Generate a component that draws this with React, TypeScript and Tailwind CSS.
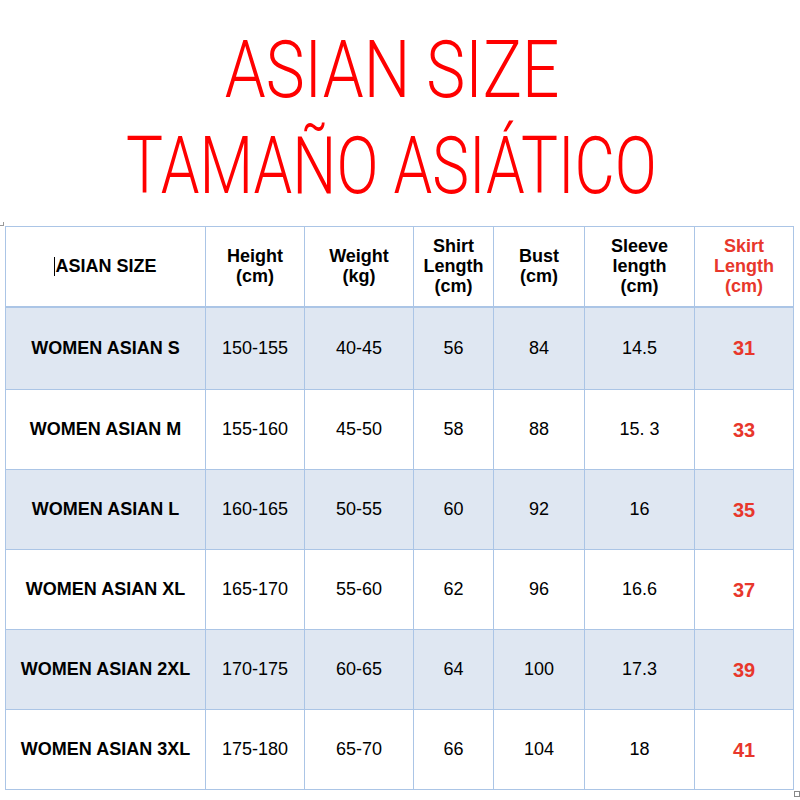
const cols = [200, 99, 109, 80, 91, 110, 99];

const rows = [
  { size: "WOMEN ASIAN S", height: "150-155", weight: "40-45", shirt: "56", bust: "84", sleeve: "14.5", skirt: "31" },
  { size: "WOMEN ASIAN M", height: "155-160", weight: "45-50", shirt: "58", bust: "88", sleeve: "15. 3", skirt: "33" },
  { size: "WOMEN ASIAN L", height: "160-165", weight: "50-55", shirt: "60", bust: "92", sleeve: "16", skirt: "35" },
  { size: "WOMEN ASIAN XL", height: "165-170", weight: "55-60", shirt: "62", bust: "96", sleeve: "16.6", skirt: "37" },
  { size: "WOMEN ASIAN 2XL", height: "170-175", weight: "60-65", shirt: "64", bust: "100", sleeve: "17.3", skirt: "39" },
  { size: "WOMEN ASIAN 3XL", height: "175-180", weight: "65-70", shirt: "66", bust: "104", sleeve: "18", skirt: "41" },
];

const cell = "border border-[#abc5e6] text-center align-middle p-0";

function Title() {
  return (
    <div className="flex flex-col items-center pt-[22px] pr-[17px] text-[#ff0000] font-light text-[80px] leading-[96px] font-['Roboto',sans-serif]">
      <span className="inline-block scale-x-[0.82] whitespace-nowrap">ASIAN SIZE</span>
      <span className="inline-block scale-x-[0.775] whitespace-nowrap">TAMAÑO ASIÁTICO</span>
    </div>
  );
}

export default function App() {
  return (
    <div className="relative w-[800px] h-[800px] bg-white overflow-hidden font-['Liberation_Sans',Arial,sans-serif] text-black">
      <Title />

      <div className="absolute left-0 top-[222px] w-[4px] h-[4px] border-r border-b border-[#999]" />
      <div className="absolute left-[794px] top-[791px] w-[6px] h-[6px] border border-[#888]" />

      <table className="table-fixed border-collapse ml-[5px] mt-[12px] w-[788px]">
        <colgroup>
          {cols.map((w, i) => (
            <col key={i} style={{ width: w }} />
          ))}
        </colgroup>
        <thead>
          <tr className="h-[80px] text-[18px] leading-[20px] font-bold">
            <th className={`${cell} border-b-2`}>
              <span className="inline-block w-px h-[19px] bg-black align-[-4px]" />
              ASIAN SIZE
            </th>
            <th className={`${cell} border-b-2`}>Height<br />(cm)</th>
            <th className={`${cell} border-b-2`}>Weight<br />(kg)</th>
            <th className={`${cell} border-b-2`}>Shirt<br />Length<br />(cm)</th>
            <th className={`${cell} border-b-2`}>Bust<br />(cm)</th>
            <th className={`${cell} border-b-2`}>Sleeve<br />length<br />(cm)</th>
            <th className={`${cell} border-b-2 text-[#e8372c]`}>Skirt<br />Length<br />(cm)</th>
          </tr>
        </thead>
        <tbody>
          {rows.map((r, i) => (
            <tr key={r.size} className={`${i === 0 ? "h-[83px]" : "h-[80px]"} text-[18px] ${i % 2 === 0 ? "bg-[#dfe7f2]" : "bg-white"}`}>
              <td className={`${cell} font-bold`}>{r.size}</td>
              <td className={cell}>{r.height}</td>
              <td className={cell}>{r.weight}</td>
              <td className={cell}>{r.shirt}</td>
              <td className={cell}>{r.bust}</td>
              <td className={cell}>{r.sleeve}</td>
              <td className={`${cell} font-bold text-[20px] text-[#e8372c]`}>{r.skirt}</td>
            </tr>
          ))}
        </tbody>
      </table>
    </div>
  );
}
